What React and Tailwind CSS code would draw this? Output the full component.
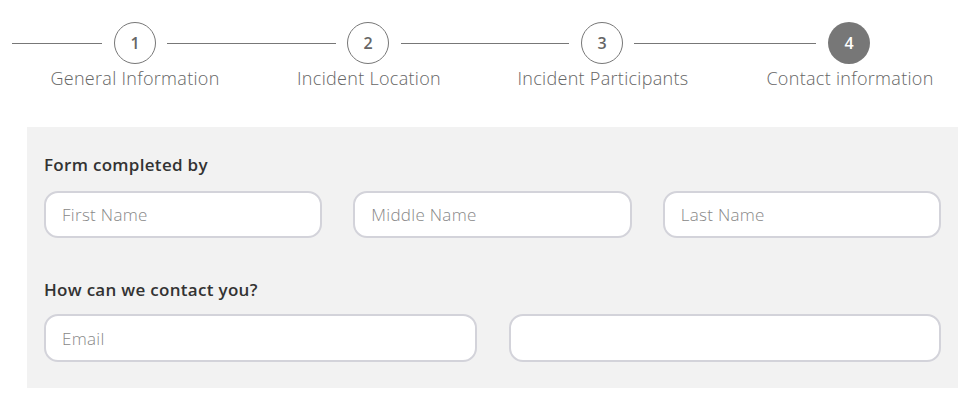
import React from 'react';

const steps = [
    { n: 1, label: 'General Information' },
    { n: 2, label: 'Incident Location' },
    { n: 3, label: 'Incident Participants' },
    { n: 4, label: 'Contact information', active: true },
];

const Circle = ({ n, active }) => (
    <div
        className={`w-[42px] h-[42px] shrink-0 rounded-full flex items-center justify-center text-[16px] font-semibold ${active
            ? 'bg-[#777777] text-white'
            : 'border border-[#777777] text-[#666666]'
            }`}
    >
        {n}
    </div>
);

const Field = ({ placeholder, className = '' }) => (
    <input
        type="text"
        placeholder={placeholder}
        className={`h-[47px] bg-white rounded-[14px] border-2 border-[#d3d3da] px-[16px] text-[17px] font-light tracking-[0.3px] text-[#555] placeholder:text-[#888888] outline-none ${className}`}
    />
);

export default function App() {
    return (
        <div className="w-[978px] h-[409px] bg-white overflow-hidden" style={{ fontFamily: '"Open Sans", Lato, sans-serif' }}>
            {/* Stepper */}
            <div className="pt-[22px] pl-[12px]">
                <div className="flex items-center">
                    <div className="w-[90px] h-px bg-[#777777]" />
                    <div className="w-[12px]" />
                    <Circle n={1} />
                    <div className="w-[11px]" />
                    <div className="w-[169px] h-px bg-[#777777]" />
                    <div className="w-[11px]" />
                    <Circle n={2} />
                    <div className="w-[12px]" />
                    <div className="w-[168px] h-px bg-[#777777]" />
                    <div className="w-[12px]" />
                    <Circle n={3} />
                    <div className="w-[11px]" />
                    <div className="w-[182px] h-px bg-[#777777]" />
                    <div className="w-[12px]" />
                    <Circle n={4} active />
                </div>
            </div>
            <div className="flex pl-[35px] mt-[2px] text-[18px] font-light tracking-[0.3px] text-[#666666] leading-[24px]">
                <div className="w-[200px] text-center">{steps[0].label}</div>
                <div className="w-[34px]" />
                <div className="w-[200px] text-center">{steps[1].label}</div>
                <div className="w-[34px]" />
                <div className="w-[200px] text-center">{steps[2].label}</div>
                <div className="w-[47px]" />
                <div className="w-[200px] text-center">{steps[3].label}</div>
            </div>

            {/* Form panel */}
            <div className="ml-[27px] mt-[37px] w-[931px] h-[261px] bg-[#f2f2f2] px-[17px] pt-[27px]">
                <h3 className="text-[17px] font-semibold tracking-[0.3px] text-[#333333] leading-[22px]">Form completed by</h3>
                <div className="grid grid-cols-3 gap-[31px] mt-[15px]">
                    <Field placeholder="First Name" />
                    <Field placeholder="Middle Name" />
                    <Field placeholder="Last Name" />
                </div>
                <h3 className="text-[17px] font-semibold tracking-[0.3px] text-[#333333] leading-[22px] mt-[41px]">How can we contact you?</h3>
                <div className="grid grid-cols-2 gap-[32px] mt-[13px]">
                    <Field placeholder="Email" className="h-[48px]" />
                    <Field className="h-[48px]" />
                </div>
            </div>
        </div>
    );
}
